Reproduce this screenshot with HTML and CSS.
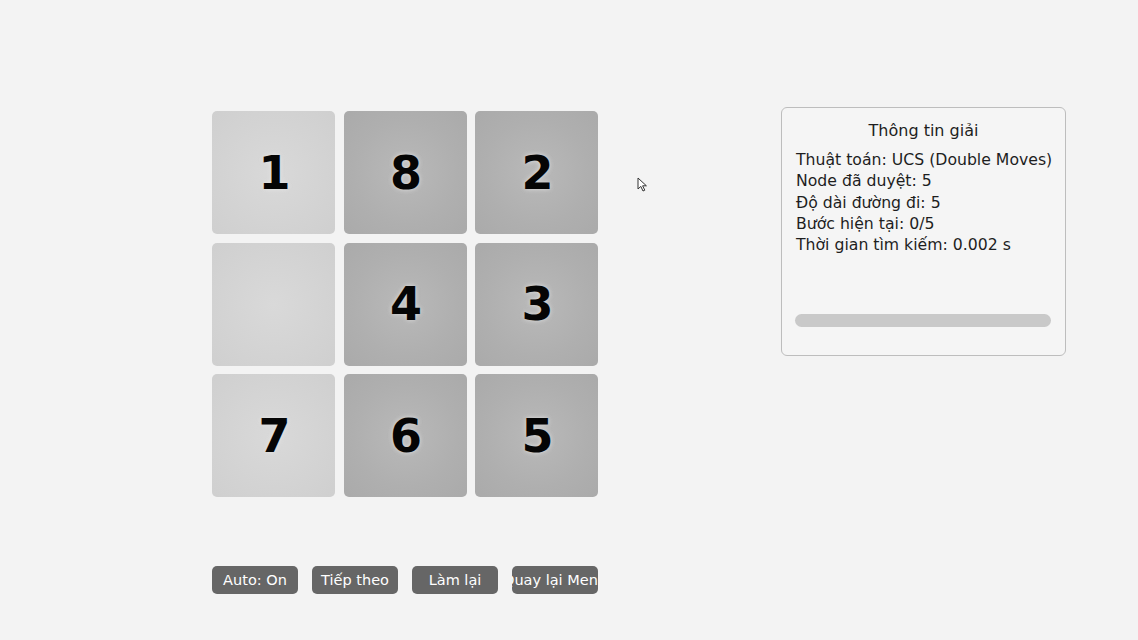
FILE: index.html
```html
<!DOCTYPE html>
<html lang="vi">
<head>
<meta charset="utf-8">
<link rel="stylesheet" href="styles.css">
</head>
<body>
<div class="page">
  <div class="left">
    <div class="board">
      <div class="tile light"><span>1</span></div>
      <div class="tile dark"><span>8</span></div>
      <div class="tile dark"><span>2</span></div>
      <div class="tile light"></div>
      <div class="tile dark"><span>4</span></div>
      <div class="tile dark"><span>3</span></div>
      <div class="tile light"><span>7</span></div>
      <div class="tile dark"><span>6</span></div>
      <div class="tile dark"><span>5</span></div>
    </div>
    <div class="buttons">
      <div class="btn">Auto: On</div>
      <div class="btn">Tiếp theo</div>
      <div class="btn">Làm lại</div>
      <div class="btn">Quay lại Menu</div>
    </div>
  </div>
  <div class="panel">
    <div class="title">Thông tin giải</div>
    <div class="lines">
      <div>Thuật toán: UCS (Double Moves)</div>
      <div>Node đã duyệt: 5</div>
      <div>Độ dài đường đi: 5</div>
      <div>Bước hiện tại: 0/5</div>
      <div>Thời gian tìm kiếm: 0.002 s</div>
    </div>
    <div class="progress"></div>
  </div>
</div>
<svg class="cursor" width="12" height="16" viewBox="0 0 12 16"><path d="M1 1 L1 12 L3.8 9.4 L6 14 L7.8 13.2 L5.6 8.8 L9.4 8.8 Z" fill="#fff" stroke="#333" stroke-width="1"/></svg>
</body>
</html>
```
FILE: styles.css
```css
html, body {
  margin: 0;
  padding: 0;
}
body {
  width: 1138px;
  height: 640px;
  background: #f3f3f3;
  font-family: "DejaVu Sans", Verdana, sans-serif;
  overflow: hidden;
  position: relative;
}
.page {
  display: flex;
  align-items: flex-start;
  padding: 107px 0 0 212px;
}
.left {
  display: flex;
  flex-direction: column;
  padding-top: 4px;
}
.board {
  display: grid;
  grid-template-columns: repeat(3, 123px);
  grid-auto-rows: 123px;
  column-gap: 8.5px;
  row-gap: 8.5px;
}
.tile {
  border-radius: 5px;
  display: flex;
  align-items: center;
  justify-content: center;
}
.tile span {
  font-weight: bold;
  font-size: 46px;
  color: #050505;
  text-shadow: 0 0 5px rgba(235,235,235,0.8);
  line-height: 1;
  margin-left: 2px;
}
.tile.light {
  background: radial-gradient(circle at 50% 50%, #d9d9d9 0%, #d2d2d2 70%, #cfcfcf 100%);
}
.tile.dark {
  background: radial-gradient(circle at 50% 50%, #b9b9b9 0%, #afafaf 60%, #aaaaaa 100%);
}
.buttons {
  display: flex;
  gap: 14px;
  margin-top: 69px;
}
.btn {
  width: 86px;
  height: 28px;
  background: #666666;
  border-radius: 5px;
  color: #fff;
  font-size: 14.5px;
  display: flex;
  align-items: center;
  justify-content: center;
  white-space: nowrap;
  overflow: hidden;
}
.panel {
  margin-left: 183px;
  width: 283px;
  height: 247px;
  border: 1px solid #bdbdbd;
  border-radius: 6px;
  background: #f5f5f5;
  display: flex;
  flex-direction: column;
  color: #1e1e1e;
}
.title {
  text-align: center;
  font-size: 16px;
  margin-top: 13px;
  line-height: 20px;
}
.lines {
  margin-top: 8px;
  padding-left: 14px;
  font-size: 15.7px;
  line-height: 21.3px;
}
.progress {
  margin: auto 14px 28px 13px;
  height: 13px;
  border-radius: 7px;
  background: #c9c9c9;
}
.cursor {
  position: absolute;
  left: 637px;
  top: 177px;
}
```
